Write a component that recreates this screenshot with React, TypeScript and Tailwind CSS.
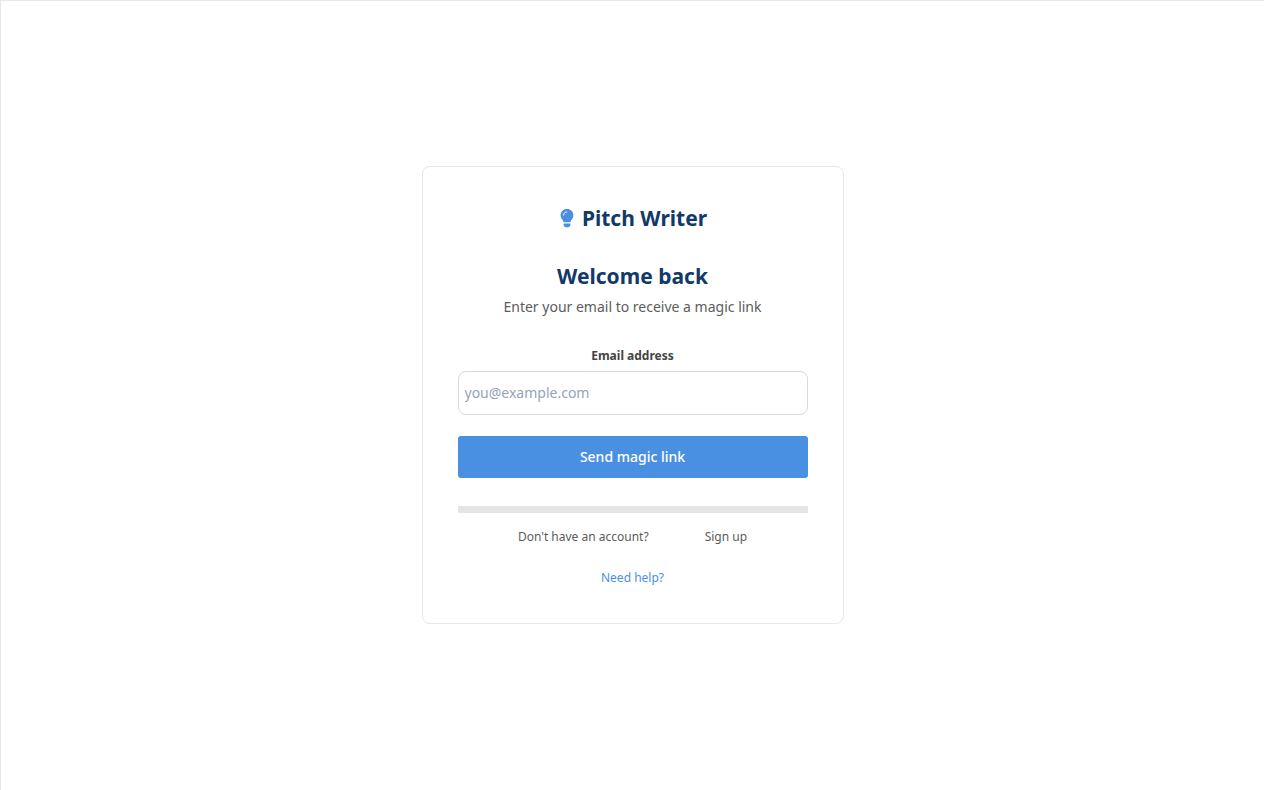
export default function App() {
  return (
    <main className="flex min-h-screen items-center justify-center border-t border-l border-[#e8e8ea] bg-white pb-0.5 font-['Noto_Sans',sans-serif]">
      <section className="flex w-full max-w-[422px] flex-col items-center rounded-lg border border-[#e8e8e8] px-[35px] pt-[35px] pb-[37px]">
        <div className="flex items-center gap-2 text-[#123967]">
          <svg viewBox="-2 0 16 20" className="h-5 w-4" fill="none" aria-hidden="true">
            <path
              d="M7 1C3.4 1 .6 3.7.6 7.2c0 1.8.8 3.1 1.7 4.4.7 1 1.1 1.8 1.3 2.7h6.8c.2-.9.6-1.7 1.3-2.7.9-1.3 1.7-2.6 1.7-4.4C13.4 3.7 10.6 1 7 1Z"
              fill="#4a90e2"
            />
            <path d="M3.6 7.1C3.6 5.2 5 4 6.8 4" stroke="#ffffff" strokeWidth="1" strokeLinecap="round" />
            <path d="M3.6 15.6h6.8v.8c0 1.6-1 2.8-2.5 2.8H6.1c-1.5 0-2.5-1.2-2.5-2.8Z" fill="#4a90e2" />
          </svg>
          <span className="text-[21px] leading-8 font-bold">Pitch Writer</span>
        </div>
        <h1 className="mt-[26px] text-[21px] leading-8 font-bold text-[#123967]">Welcome back</h1>
        <p className="mt-[3px] text-sm leading-6 text-[#5c5c5c]">Enter your email to receive a magic link</p>
        <form className="mt-[29px] flex w-full flex-col" onSubmit={(e) => e.preventDefault()}>
          <label htmlFor="email" className="text-center text-xs leading-4 font-bold text-[#444444]">
            Email address
          </label>
          <input
            id="email"
            type="email"
            placeholder="you@example.com"
            className="mt-[7px] h-11 w-full rounded-lg border border-[#d9d9d9] px-1.5 text-sm placeholder:text-[#94a3b8]"
          />
          <button type="submit" className="mt-[21px] h-[42px] rounded-[3px] bg-[#4a90e2] text-sm font-medium text-white">
            Send magic link
          </button>
        </form>
        <div className="mt-7 h-[7px] w-full bg-[#e5e5e5]" />
        <div className="mt-4 flex items-center gap-14 text-xs leading-4 text-[#5c5c5c]">
          <span>Don't have an account?</span>
          <a href="#signup">Sign up</a>
        </div>
        <a href="#help" className="mt-[25px] text-xs leading-4 text-[#4a90e2]">Need help?</a>
      </section>
    </main>
  );
}
